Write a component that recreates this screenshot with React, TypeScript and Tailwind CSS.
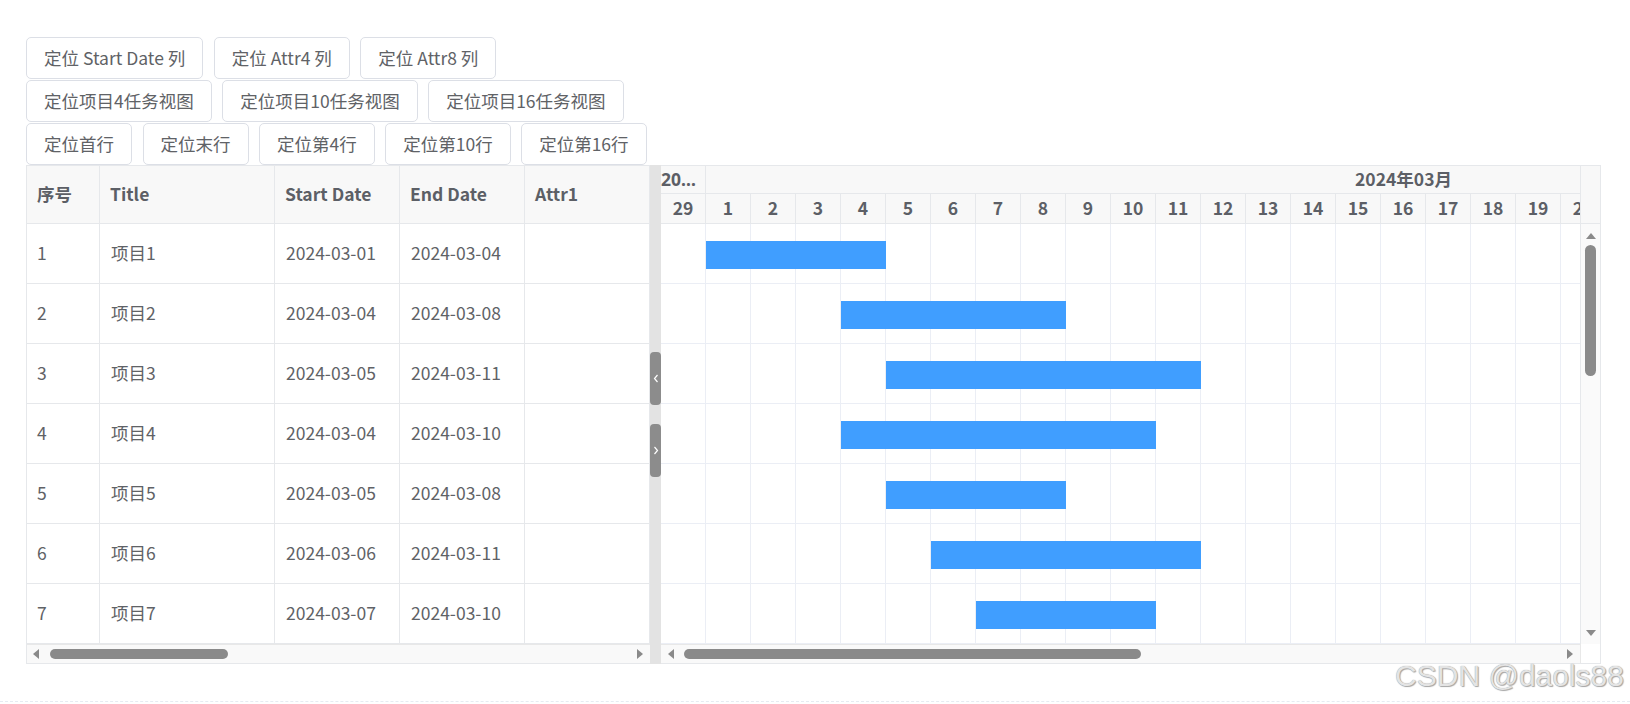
import React from 'react'

type Row = {
  id: number
  title: string
  start: string
  end: string
  s: number
  e: number
}

const rows: Row[] = [
  { id: 1, title: '项目1', start: '2024-03-01', end: '2024-03-04', s: 1, e: 4 },
  { id: 2, title: '项目2', start: '2024-03-04', end: '2024-03-08', s: 4, e: 8 },
  { id: 3, title: '项目3', start: '2024-03-05', end: '2024-03-11', s: 5, e: 11 },
  { id: 4, title: '项目4', start: '2024-03-04', end: '2024-03-10', s: 4, e: 10 },
  { id: 5, title: '项目5', start: '2024-03-05', end: '2024-03-08', s: 5, e: 8 },
  { id: 6, title: '项目6', start: '2024-03-06', end: '2024-03-11', s: 6, e: 11 },
  { id: 7, title: '项目7', start: '2024-03-07', end: '2024-03-10', s: 7, e: 10 },
]

const buttonRows = [
  ['定位 Start Date 列', '定位 Attr4 列', '定位 Attr8 列'],
  ['定位项目4任务视图', '定位项目10任务视图', '定位项目16任务视图'],
  ['定位首行', '定位末行', '定位第4行', '定位第10行', '定位第16行'],
]

const columns = [
  { label: '序号', cls: 'w-[73px]' },
  { label: 'Title', cls: 'w-[175px]' },
  { label: 'Start Date', cls: 'w-[125px]' },
  { label: 'End Date', cls: 'w-[125px]' },
  { label: 'Attr1', cls: 'w-[125px]' },
  { label: 'Attr2', cls: 'w-[125px]' },
]

const days = [29, ...Array.from({ length: 20 }, (_, i) => i + 1)]
const DAY = 45

function Tri({ dir }: { dir: 'left' | 'right' | 'up' | 'down' }) {
  const pts = {
    left: '6,0 6,10 0,5',
    right: '0,0 0,10 6,5',
    up: '0,6 10,6 5,0',
    down: '0,0 10,0 5,6',
  }[dir]
  const vertical = dir === 'up' || dir === 'down'
  return (
    <svg width={vertical ? 10 : 6} height={vertical ? 6 : 10} viewBox={vertical ? '0 0 10 6' : '0 0 6 10'} className="shrink-0">
      <polygon points={pts} fill="#8a8a8a" />
    </svg>
  )
}

function Chevron({ left }: { left?: boolean }) {
  return (
    <svg width="6" height="9" viewBox="0 0 6 9">
      <path d={left ? 'M4.5 1 L1.5 4.5 L4.5 8' : 'M1.5 1 L4.5 4.5 L1.5 8'} fill="none" stroke="#fff" strokeWidth="1.2" />
    </svg>
  )
}

export default function App() {
  return (
    <div className="relative w-[1630px] h-[704px] bg-white overflow-hidden text-[#606266] font-['Noto_Sans_CJK_SC','Noto_Sans',sans-serif]">
      {/* Buttons */}
      <div className="pt-[37px] pl-[26px] flex flex-col gap-[1px]">
        {buttonRows.map((r, i) => (
          <div key={i} className="flex gap-[10.5px]">
            {r.map(b => (
              <button
                key={b}
                className="h-[42px] px-[17px] border border-[#dcdfe6] rounded-[5px] bg-white text-[17.5px] leading-none text-[#606266] whitespace-nowrap"
              >
                {b}
              </button>
            ))}
          </div>
        ))}
      </div>

      {/* Table + Gantt */}
      <div className="ml-[26px] flex h-[499px]">
        {/* Left table */}
        <div className="w-[624px] h-full flex flex-col border border-r-0 border-[#e6e8eb] overflow-hidden">
          <div className="flex h-[58px] shrink-0 bg-[#f8f8f8] border-b border-[#e6e8eb]">
            {columns.map(c => (
              <div key={c.label} className={`${c.cls} shrink-0 flex items-center pl-[10px] border-r border-[#e6e8eb] text-[17.5px] font-bold text-[#5c5f66]`}>
                {c.label}
              </div>
            ))}
          </div>
          {rows.map(r => (
            <div key={r.id} className="flex h-[60px] shrink-0 border-b border-[#e6e8eb] text-[17.5px]">
              <div className="w-[73px] shrink-0 flex items-center pl-[10px] border-r border-[#e6e8eb]">{r.id}</div>
              <div className="w-[175px] shrink-0 flex items-center pl-[11px] border-r border-[#e6e8eb]">{r.title}</div>
              <div className="w-[125px] shrink-0 flex items-center pl-[11px] border-r border-[#e6e8eb]">{r.start}</div>
              <div className="w-[125px] shrink-0 flex items-center pl-[11px] border-r border-[#e6e8eb]">{r.end}</div>
              <div className="w-[125px] shrink-0 border-r border-[#e6e8eb]" />
              <div className="w-[125px] shrink-0 border-r border-[#e6e8eb]" />
            </div>
          ))}
          {/* horizontal scrollbar */}
          <div className="flex-1 flex items-center bg-[#f9f9f9] border-t border-[#e8e8e8] pl-[6px] pr-[7px]">
            <Tri dir="left" />
            <div className="flex-1 flex items-center pl-[11px] pr-[10px]">
              <div className="w-[178px] h-[10px] rounded-full bg-[#8a8a8a]" />
            </div>
            <Tri dir="right" />
          </div>
        </div>

        {/* Splitter */}
        <div className="w-[11px] h-full shrink-0 bg-[#e3e3e3] flex flex-col items-center justify-center gap-[19px]">
          <div className="w-[11px] h-[53px] rounded-[4px] bg-[#8c8c8c] flex items-center justify-center">
            <Chevron left />
          </div>
          <div className="w-[11px] h-[53px] rounded-[4px] bg-[#8c8c8c] flex items-center justify-center">
            <Chevron />
          </div>
        </div>

        {/* Gantt */}
        <div className="w-[940px] h-full shrink-0 flex flex-col border border-l-0 border-[#e6e8eb]">
          {/* header */}
          <div className="flex h-[58px] shrink-0 bg-[#f8f8f8] border-b border-[#e6e8eb]">
            <div className="w-[920px] shrink-0 overflow-hidden border-r border-[#e6e8eb] flex flex-col font-bold text-[17.5px] text-[#5c5f66]">
              <div className="flex h-[28px] shrink-0 border-b border-[#e6e8eb]">
                <div className="w-[45px] shrink-0 border-r border-[#e6e8eb] flex items-center pr-[5px] overflow-hidden">
                  <span className="truncate font-['Noto_Sans','Noto_Sans_CJK_SC',sans-serif]">2024年02月</span>
                </div>
                <div className="w-[1395px] shrink-0 flex items-center justify-center">2024年03月</div>
              </div>
              <div className="flex flex-1">
                {days.map((d, i) => (
                  <div key={i} className="w-[45px] shrink-0 flex items-center justify-center border-r border-[#e6e8eb]">
                    {d}
                  </div>
                ))}
              </div>
            </div>
            <div className="flex-1" />
          </div>

          {/* body */}
          <div className="flex h-[420px] shrink-0">
            <div className="w-[920px] shrink-0 overflow-hidden border-r border-[#e6e8eb]">
              {rows.map(r => (
                <div key={r.id} className="relative flex h-[60px] border-b border-[#ebeef5]">
                  {days.map((_, i) => (
                    <div key={i} className="w-[45px] shrink-0 border-r border-[#ebeef5]" />
                  ))}
                  <div
                    className="absolute top-[17px] h-[28px] bg-[#409eff]"
                    style={{ left: r.s * DAY, width: (r.e - r.s + 1) * DAY }}
                  />
                </div>
              ))}
            </div>
            {/* vertical scrollbar */}
            <div className="flex-1 bg-[#fafafa] flex flex-col items-center pt-[9px] pb-[8px]">
              <Tri dir="up" />
              <div className="mt-[6px] w-[11px] h-[131px] rounded-full bg-[#8a8a8a]" />
              <div className="flex-1" />
              <Tri dir="down" />
            </div>
          </div>

          {/* horizontal scrollbar */}
          <div className="flex flex-1">
            <div className="w-[920px] shrink-0 flex items-center bg-[#f9f9f9] border-t border-r border-[#e8e8e8] pl-[7px] pr-[7px]">
              <Tri dir="left" />
              <div className="flex-1 flex items-center pl-[10px]">
                <div className="w-[457px] h-[10px] rounded-full bg-[#8a8a8a]" />
              </div>
              <Tri dir="right" />
            </div>
            <div className="flex-1 bg-white" />
          </div>
        </div>
      </div>

      {/* bottom dashed rule */}
      <div className="absolute left-0 right-0 top-[701px] border-t border-dashed border-[#e6ebf2]" />

      {/* watermark */}
      <div className="absolute right-[6px] top-[661px] text-[30px] leading-none font-['Liberation_Sans',sans-serif] text-[#e4e4e4] [text-shadow:0_0_1px_#8c8c8c,1px_1px_1px_#a8a8a8]">
        CSDN @daols88
      </div>
    </div>
  )
}
